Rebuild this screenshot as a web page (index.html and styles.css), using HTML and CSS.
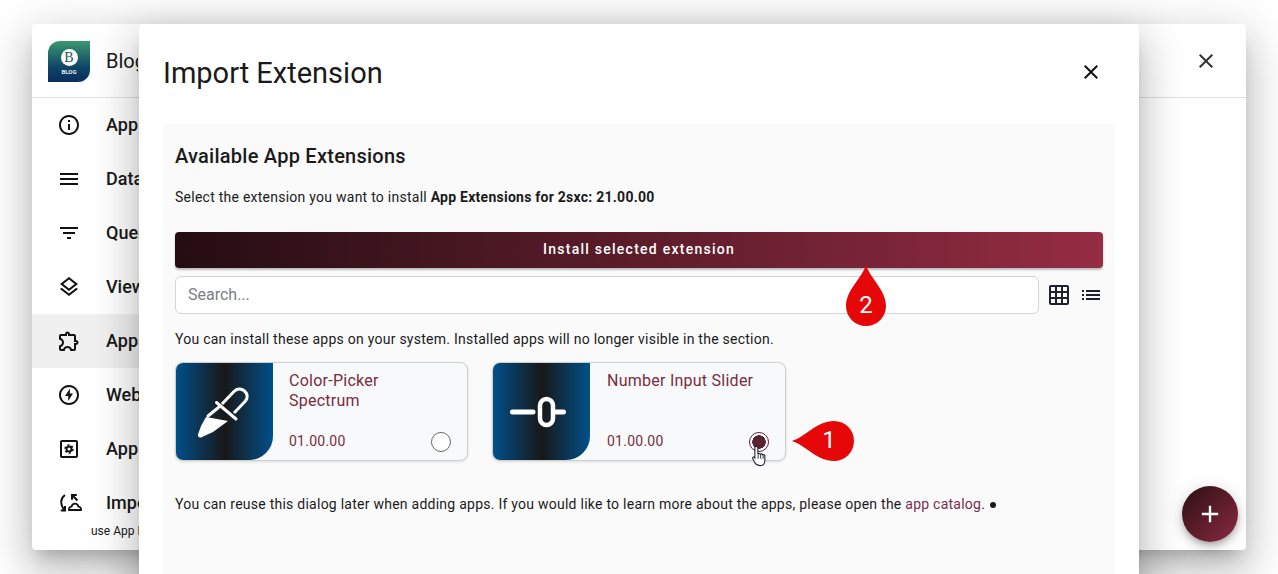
FILE: index.html
```html
<!DOCTYPE html>
<html lang="en">
<head>
  <meta charset="UTF-8">
  <title>Import Extension</title>
  <link rel="stylesheet" href="styles.css">
</head>
<body>
  <div class="back-dialog">
    <div class="back-header">
      <div class="app-logo">
        <span class="logo-circle">B</span>
        <span class="logo-name">BLOG</span>
      </div>
      <span class="back-title">Blog</span>
      <svg class="back-close" viewBox="0 0 24 24"><path d="M19 6.41 17.59 5 12 10.59 6.41 5 5 6.41 10.59 12 5 17.59 6.41 19 12 13.41 17.59 19 19 17.59 13.41 12z"/></svg>
    </div>
    <nav class="side-nav">
      <a class="nav-row">
        <svg viewBox="0 0 24 24"><path d="M11 7h2v2h-2zm0 4h2v6h-2zm1-9C6.48 2 2 6.48 2 12s4.48 10 10 10 10-4.48 10-10S17.52 2 12 2zm0 18c-4.41 0-8-3.59-8-8s3.59-8 8-8 8 3.59 8 8-3.59 8-8 8z"/></svg>
        <span>App</span>
      </a>
      <a class="nav-row">
        <svg viewBox="0 0 24 24"><path d="M3 18h18v-2H3v2zm0-5h18v-2H3v2zm0-7v2h18V6H3z"/></svg>
        <span>Data</span>
      </a>
      <a class="nav-row">
        <svg viewBox="0 0 24 24"><path d="M10 18h4v-2h-4v2zM3 6v2h18V6H3zm3 7h12v-2H6v2z"/></svg>
        <span>Queries</span>
      </a>
      <a class="nav-row">
        <svg viewBox="0 0 24 24"><path d="M11.99 18.54l-7.37-5.73L3 14.07l9 7 9-7-1.63-1.27zM12 16l7.36-5.73L21 9l-9-7-9 7 1.63 1.27L12 16zm0-11.47L17.74 9 12 13.47 6.26 9 12 4.53z"/></svg>
        <span>Views</span>
      </a>
      <a class="nav-row active">
        <svg viewBox="0 0 24 24"><path d="M10.5 4.5c.28 0 .5.22.5.5v2h6v6h2c.28 0 .5.22.5.5s-.22.5-.5.5h-2v6h-2.12c-.68-1.75-2.39-3-4.38-3s-3.7 1.25-4.38 3H4v-2.12c1.75-.68 3-2.39 3-4.38 0-1.99-1.24-3.7-2.99-4.38L4 7h6V5c0-.28.22-.5.5-.5m0-2C9.12 2.5 8 3.62 8 5H4c-1.1 0-1.99.9-1.99 2v3.8h.29c1.49 0 2.7 1.21 2.7 2.7s-1.21 2.7-2.7 2.7H2V20c0 1.1.9 2 2 2h3.8v-.3c0-1.49 1.21-2.7 2.7-2.7s2.7 1.21 2.7 2.7v.3H17c1.1 0 2-.9 2-2v-4c1.38 0 2.5-1.12 2.5-2.5S20.38 11 19 11V7c0-1.1-.9-2-2-2h-4c0-1.38-1.12-2.5-2.5-2.5z"/></svg>
        <span>Apps</span>
      </a>
      <a class="nav-row">
        <svg viewBox="0 0 24 24"><path d="M12 2C6.48 2 2 6.48 2 12s4.48 10 10 10 10-4.48 10-10S17.52 2 12 2zm0 18c-4.41 0-8-3.59-8-8s3.59-8 8-8 8 3.59 8 8-3.59 8-8 8zm1-14.500L8 13h3.200v5l4.800-7.500h-3.200z"/></svg>
        <span>Web API</span>
      </a>
      <a class="nav-row">
        <svg viewBox="0 0 24 24"><path d="M19 3H5c-1.100 0-2 .9-2 2v14c0 1.100.9 2 2 2h14c1.100 0 2-.9 2-2V5c0-1.100-.9-2-2-2zm0 16H5V5h14v14z"/><circle cx="12" cy="12" r="2.500" fill="none" stroke="#111" stroke-width="2"/><circle cx="12" cy="12" r="4" fill="none" stroke="#111" stroke-width="1.500" stroke-dasharray="2.100 2.090"/></svg>
        <span>App Settings</span>
      </a>
      <a class="nav-row">
        <svg class="import-icon" viewBox="0 0 24 24">
          <path d="M8 4C3.500 7 2.800 13.500 7 18.500M3.800 19.500H8V15M20.500 9.500 15 4M15 8.800V4h4.800" fill="none" stroke="#111" stroke-width="2"/>
          <path d="M12 19c-.3-2.200 1-3.300 2.500-3.300.5-2 2-3 3.500-3s3 1 3.500 3c1.500 0 2.800 1.100 2.500 3.300z" fill="none" stroke="#111" stroke-width="1.800"/>
        </svg>
        <span>Import</span>
      </a>
      <div class="nav-hint">use App Extensions</div>
    </nav>
    <button class="fab">
      <svg viewBox="0 0 24 24"><path d="M19 13h-6v6h-2v-6H5v-2h6V5h2v6h6z"/></svg>
    </button>
  </div>

  <div class="front-dialog">
    <div class="front-header">
      <h2>Import Extension</h2>
      <svg class="front-close" viewBox="0 0 24 24"><path d="M19 6.41 17.59 5 12 10.59 6.41 5 5 6.41 10.59 12 5 17.59 6.41 19 12 13.41 17.59 19 19 17.59 13.41 12z"/></svg>
    </div>
    <div class="panel">
      <h3>Available App Extensions</h3>
      <p class="select-line">Select the extension you want to install <b>App Extensions for 2sxc: 21.00.00</b></p>
      <button class="install-button">Install selected extension</button>
      <div class="search-row">
        <input class="search-input" type="text" placeholder="Search...">
        <svg class="view-icon" viewBox="0 0 24 24"><path d="M20 2H4c-1.100 0-2 .9-2 2v16c0 1.100.9 2 2 2h16c1.100 0 2-.9 2-2V4c0-1.100-.9-2-2-2zM8 20H4v-4h4v4zm0-6H4v-4h4v4zm0-6H4V4h4v4zm6 12h-4v-4h4v4zm0-6h-4v-4h4v4zm0-6h-4V4h4v4zm6 12h-4v-4h4v4zm0-6h-4v-4h4v4zm0-6h-4V4h4v4z"/></svg>
        <svg class="view-icon" viewBox="0 0 24 24"><path d="M3 13h2v-2H3v2zm0 4h2v-2H3v2zm0-8h2V7H3v2zm4 4h14v-2H7v2zm0 4h14v-2H7v2zM7 7v2h14V7H7z"/></svg>
      </div>
      <p class="info-line">You can install these apps on your system. Installed apps will no longer visible in the section.</p>
      <div class="card-list">
        <div class="ext-card">
          <div class="ext-thumb">
            <svg viewBox="0 0 62 58" class="thumb-icon">
              <path d="M23.500 18.500 43 35" fill="none" stroke="#fff" stroke-width="3" stroke-linecap="round"/>
              <path d="M29 20 41 7.500c3-3 7-3.500 10.500-.5s3.500 7.500.5 10.500L41 29" fill="none" stroke="#fff" stroke-width="3"/>
              <path d="M25.500 23.500 15 32" fill="none" stroke="#fff" stroke-width="3" stroke-linecap="round"/>
              <path d="M13 33 35 37 20 48 8 53.500c-2 .5-3.500-1-3-3L8 42z" fill="#fff"/>
            </svg>
          </div>
          <div class="ext-body">
            <div class="ext-name">Color-Picker Spectrum</div>
            <div class="ext-foot">
              <span>01.00.00</span>
              <span class="radio"></span>
            </div>
          </div>
        </div>
        <div class="ext-card">
          <div class="ext-thumb">
            <svg viewBox="0 0 56 32" class="thumb-slider">
              <path d="M2.500 16H23M44 16h9.500" fill="none" stroke="#fff" stroke-width="5" stroke-linecap="round"/>
              <rect x="30" y="3" width="13" height="26" rx="6.500" fill="none" stroke="#fff" stroke-width="4.500"/>
            </svg>
          </div>
          <div class="ext-body">
            <div class="ext-name">Number Input Slider</div>
            <div class="ext-foot">
              <span>01.00.00</span>
              <span class="radio checked"></span>
            </div>
          </div>
        </div>
      </div>
      <p class="reuse-line">You can reuse this dialog later when adding apps. If you would like to learn more about the apps, please open the <a>app catalog</a>. <span class="tiny-dot"></span></p>
    </div>
  </div>

  <!-- annotation pins drawn on top of the screenshot -->
  <div class="pin pin-two">
    <svg viewBox="0 0 40 61"><path d="M20 0C24 13 40 25 40 41a20 20 0 0 1-40 0C0 25 16 13 20 0z"/></svg>
    <span>2</span>
  </div>
  <div class="pin pin-one">
    <svg viewBox="0 0 62 40"><path d="M0 20C13 16 25 0 42 0a20 20 0 0 1 0 40C25 40 13 24 0 20z"/></svg>
    <span>1</span>
  </div>
  <svg class="hand-cursor" viewBox="0 0 18 24">
    <path d="M5 1.500c1 0 1.700.7 1.700 1.700v6.600c.3-.8 2.400-.8 2.700.3.500-.7 2.300-.6 2.600.5.700-.5 2.300-.1 2.300 1.200v4.700c0 3.500-2 6-5.300 6-3 0-4.500-1-5.800-3.300L1.100 14.700c-.6-1.200 1-2.300 2-1.200l.3.500V3.200C3.300 2.200 4 1.500 5 1.500z" fill="#fff" stroke="#1d2433" stroke-width="1.200"/>
    <path d="M7 10v5M9.700 10.500V15M12.400 11v4" stroke="#1d2433" stroke-width="1"/>
  </svg>
</body>
</html>
```

FILE: styles.css
```css
html, body {
  height: 100%;
}

body {
  margin: 0;
  padding: 24px 32px 0;
  box-sizing: border-box;
  background: #fff;
  font-family: Roboto, "Liberation Sans", sans-serif;
  color: #1a1a1a;
  overflow: hidden;
}

.back-dialog {
  position: relative;
  height: 526px;
  background: #fff;
  border-radius: 4px;
  box-shadow: 0 11px 15px -7px rgba(0,0,0,.2), 0 24px 38px 3px rgba(0,0,0,.14), 0 9px 46px 8px rgba(0,0,0,.12);
}

.back-header {
  display: flex;
  align-items: center;
  height: 73px;
  padding: 0 28px 0 16px;
  border-bottom: 1px solid #e0e0e0;
}

.app-logo {
  display: flex;
  flex-direction: column;
  align-items: center;
  flex: none;
  width: 42px;
  height: 41px;
  margin-top: 1px;
  padding-top: 8px;
  box-sizing: border-box;
  background: linear-gradient(#39986f, #0f4466 65%, #0a2d5e);
  border-radius: 12px 0 12px 0;
}

.logo-circle {
  width: 17px;
  height: 17px;
  border-radius: 50%;
  background: #fff;
  color: #1d5a5c;
  font-family: "Liberation Serif", serif;
  font-size: 14px;
  line-height: 17px;
  text-align: center;
}

.logo-name {
  margin-top: 2px;
  font-size: 6px;
  line-height: 7px;
  font-weight: 700;
  color: #e8eef0;
}

.back-title {
  width: 32px;
  margin-left: 16px;
  overflow: hidden;
  font-size: 20px;
  flex: none;
}

.back-close {
  width: 24px;
  height: 24px;
  margin-left: auto;
  fill: #333;
}

/* the list sits behind the import dialog, only its first 107px show */
.side-nav {
  width: 107px;
  overflow: hidden;
}

.nav-row {
  display: flex;
  align-items: center;
  height: 54px;
  padding-left: 25px;
  font-size: 18px;
  font-weight: 500;
  color: #1a1a1a;
  white-space: nowrap;
}

.nav-row span {
  padding-bottom: 2px;
}

.nav-row svg {
  flex: none;
  width: 24px;
  height: 24px;
  margin-right: 25px;
  fill: #111;
  overflow: visible;
}

.nav-row.active {
  background: #f0f0f0;
}

.nav-hint {
  margin-top: -6px;
  padding-left: 59px;
  font-size: 12px;
  line-height: 14px;
  white-space: nowrap;
}

.fab {
  position: absolute;
  right: 8px;
  bottom: 8px;
  width: 56px;
  height: 56px;
  padding: 0;
  border: none;
  border-radius: 50%;
  background: linear-gradient(135deg, #2a0f14, #8b2a3f);
  box-shadow: 0 3px 5px -1px rgba(0,0,0,.2), 0 6px 10px rgba(0,0,0,.14), 0 1px 18px rgba(0,0,0,.12);
  z-index: 3;
}

.fab svg {
  display: block;
  width: 28px;
  height: 28px;
  margin: auto;
  fill: #fff;
}

.front-dialog {
  position: absolute;
  top: 24px;
  left: 139px;
  width: 1000px;
  height: 620px;
  padding: 0 24px;
  box-sizing: border-box;
  background: #fff;
  border-radius: 4px;
  box-shadow: 0 11px 15px -7px rgba(0,0,0,.2), 0 24px 38px 3px rgba(0,0,0,.14), 0 9px 46px 8px rgba(0,0,0,.12);
  z-index: 2;
}

.front-header {
  display: flex;
  align-items: center;
  justify-content: space-between;
  height: 100px;
  padding-right: 12px;
}

.front-header h2 {
  margin: 0 0 2px;
  font-size: 29px;
  font-weight: 400;
}

.front-close {
  width: 24px;
  height: 24px;
  margin-bottom: 4px;
  fill: #111;
}

.panel {
  height: 500px;
  padding: 20px 12px 0;
  box-sizing: border-box;
  background: #fafafa;
  border-radius: 4px;
}

.panel h3 {
  margin: 0;
  font-size: 20px;
  font-weight: 500;
  line-height: 24px;
  letter-spacing: .25px;
}

.panel p {
  margin: 0;
  font-size: 14px;
  line-height: 20px;
  letter-spacing: .25px;
}

.select-line {
  padding-top: 19px;
}

.install-button {
  display: block;
  width: 100%;
  height: 36px;
  margin-top: 25px;
  padding: 0 0 2px;
  border: none;
  border-radius: 4px;
  background: linear-gradient(90deg, #240d12, #952c43);
  box-shadow: 0 2px 2px rgba(0,0,0,.25);
  color: #fff;
  font-family: inherit;
  font-size: 14px;
  font-weight: 500;
  letter-spacing: 1.25px;
}

.search-row {
  display: flex;
  align-items: center;
  gap: 8px;
  margin-top: 8px;
}

.search-input {
  flex: 1;
  height: 38px;
  padding: 0 12px 2px;
  box-sizing: border-box;
  background: #fff;
  border: 1px solid #d3d5da;
  border-radius: 6px;
  font-family: inherit;
  font-size: 16px;
}

.search-input::placeholder {
  color: #7a7f86;
}

.view-icon {
  width: 24px;
  height: 24px;
  fill: #1c2230;
}

.info-line {
  padding-top: 15px;
}

.card-list {
  display: flex;
  gap: 24px;
  margin-top: 13px;
}

.ext-card {
  display: flex;
  width: 293px;
  height: 99px;
  box-sizing: border-box;
  background: #f8f9fb;
  border: 1px solid #cfcfcf;
  border-radius: 8px;
  box-shadow: 0 1px 3px rgba(0,0,0,.12);
  overflow: hidden;
}

.ext-card + .ext-card {
  width: 294px;
}

.ext-thumb {
  display: flex;
  align-items: center;
  justify-content: center;
  flex: none;
  width: 97px;
  background: linear-gradient(90deg, #00508a, #181818 50%, #00508a);
  border-bottom-right-radius: 24px;
}

.thumb-icon {
  width: 62px;
  height: 58px;
  margin: 3px 2px 0 0;
}

.thumb-slider {
  width: 56px;
  height: 32px;
  margin-right: 8px;
}

.ext-body {
  display: flex;
  flex-direction: column;
  justify-content: space-between;
  flex: 1;
  padding: 8px 16px 9px;
  color: #7a2c3c;
}

.ext-card + .ext-card .ext-body {
  padding-left: 17px;
}

.ext-name {
  max-width: 150px;
  font-size: 16px;
  line-height: 20px;
  letter-spacing: .25px;
}

.ext-foot {
  display: flex;
  align-items: center;
  justify-content: space-between;
  font-size: 14px;
  letter-spacing: .25px;
}

.radio {
  width: 20px;
  height: 20px;
  margin-top: 1px;
  margin-bottom: -1px;
  box-sizing: border-box;
  border: 1px solid #666;
  border-radius: 50%;
  background: #fff;
}

.radio.checked {
  border-color: #5b2231;
  background: radial-gradient(circle, #5b2231 6.500px, #fff 7px);
}

.reuse-line {
  padding-top: 33px;
}

.reuse-line a {
  color: #7a2c4c;
}

.tiny-dot {
  display: inline-block;
  width: 6px;
  height: 6px;
  margin-left: 1px;
  border-radius: 50%;
  background: #1a1a1a;
  vertical-align: 1px;
}

.pin {
  position: absolute;
  z-index: 5;
  display: flex;
  color: #fff;
  font-size: 24px;
}

.pin svg {
  display: block;
  width: 100%;
  height: 100%;
  fill: #e60808;
}

.pin span {
  position: absolute;
  line-height: 28px;
  width: 40px;
  text-align: center;
}

.pin-two {
  top: 265px;
  left: 846px;
  width: 40px;
  height: 61px;
}

.pin-two span {
  left: 0;
  top: 26px;
}

.pin-one {
  top: 421px;
  left: 792px;
  width: 62px;
  height: 40px;
}

.pin-one span {
  left: 17px;
  top: 5px;
}

.hand-cursor {
  position: absolute;
  z-index: 6;
  top: 445px;
  left: 751px;
  width: 18px;
  height: 22px;
}
```
